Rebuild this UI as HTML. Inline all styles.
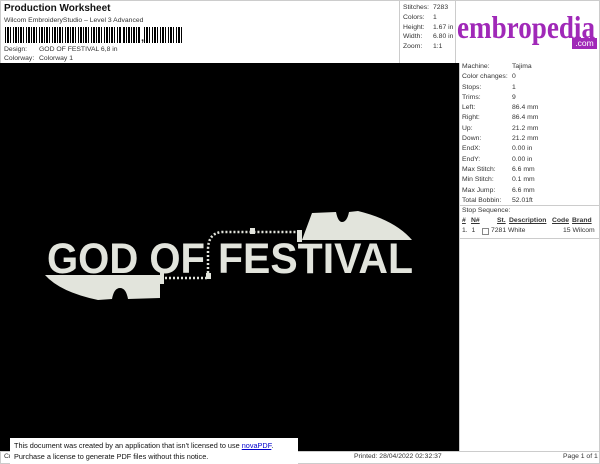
<!DOCTYPE html>
<html><head><meta charset="utf-8"><style>
*{margin:0;padding:0;box-sizing:border-box}
body{width:600px;height:464px;background:#fff;font-family:"Liberation Sans",sans-serif;color:#222;position:relative;overflow:hidden;font-size:7px}
.a{position:absolute;white-space:nowrap}
.t{font-size:6.8px;color:#333}
</style></head><body>
<div class="a" style="left:4px;top:3px;font-size:10px;font-weight:bold;color:#111">Production Worksheet</div>
<div class="a t" style="left:4px;top:17px">Wilcom EmbroideryStudio – Level 3 Advanced</div>
<div class="a" style="left:5px;top:27px;width:117px;height:16px;background:repeating-linear-gradient(90deg,#000 0 1px,#fff 1px 2px,#000 2px 4px,#fff 4px 5px,#000 5px 6px,#fff 6px 8px,#000 8px 9px,#fff 9px 10px,#000 10px 12px,#fff 12px 13px)"></div>
<div class="a" style="left:144px;top:27px;width:39px;height:16px;background:repeating-linear-gradient(90deg,#000 0 1px,#fff 1px 2px,#000 2px 4px,#fff 4px 5px,#000 5px 6px,#fff 6px 8px)"></div>
<div class="a" style="left:122px;top:27px;width:18px;height:16px;background:repeating-linear-gradient(90deg,#fff 0 1px,#000 1px 3px,#fff 3px 4px,#000 4px 5px)"></div>
<div class="a" style="left:141px;top:32px;font-size:11px;font-weight:bold">,</div>
<div class="a t" style="left:4px;top:46px">Design:</div><div class="a t" style="left:39px;top:46px">GOD OF FESTIVAL 6,8 in</div>
<div class="a t" style="left:4px;top:55px">Colorway:</div><div class="a t" style="left:39px;top:55px">Colorway 1</div>
<div class="a" style="left:0;top:0;width:600px;height:63px;border:1px solid #ccc;border-bottom:none"></div>
<div class="a" style="left:399px;top:0;width:1px;height:63px;background:#ccc"></div>
<div class="a" style="left:455px;top:0;width:1px;height:63px;background:#ccc"></div>
<div class="a t" style="left:403px;top:3px;line-height:9.8px">Stitches:<br>Colors:<br>Height:<br>Width:<br>Zoom:</div>
<div class="a t" style="left:433px;top:3px;line-height:9.8px">7283<br>1<br>1.67 in<br>6.80 in<br>1:1</div>
<svg class="a" style="left:455px;top:0" width="145" height="50"><text x="2" y="38" font-family="Liberation Serif, serif" font-weight="bold" font-size="32" fill="#a028b8" textLength="138" lengthAdjust="spacingAndGlyphs">embropedia</text></svg>
<div class="a" style="left:572px;top:38px;width:25px;height:11px;background:#a028b8;color:#fff;font-size:8.5px;line-height:11px;text-align:center">.com</div>
<div class="a" style="left:0;top:63px;width:459px;height:388px;background:#000"></div>
<svg class="a" style="left:0;top:0" width="460" height="450">
<g fill="#e2e4dc">
<path d="M312 213 L336 212 Q338 222 342 222 Q347 222 349 212 L358 211 Q395 220 412 240 L302 240 Z"/>
<rect x="297" y="230" width="5" height="12"/>
<path d="M45 275 L160 275 L160 298 L128 299 Q126 288 120 288 Q114 288 112 299 L98 300 Q60 292 45 275 Z"/>
<rect x="160" y="270" width="4" height="14"/>
<text x="47" y="273" font-family="Liberation Sans" font-weight="bold" font-size="43" textLength="158" lengthAdjust="spacingAndGlyphs">GOD OF</text>
<text x="218" y="273" font-family="Liberation Sans" font-weight="bold" font-size="43" textLength="195" lengthAdjust="spacingAndGlyphs">FESTIVAL</text>
</g>
<path d="M165 278 H208 V250 Q208 233 222 232 H296" fill="none" stroke="#e2e4dc" stroke-width="2.5" stroke-dasharray="2 2"/>
<rect x="206" y="273" width="5" height="6" fill="#e2e4dc"/><rect x="250" y="228" width="5" height="6" fill="#e2e4dc"/>
</svg>
<div class="a" style="left:459px;top:63px;width:141px;height:388px;border-left:1px solid #ccc;border-right:1px solid #ccc"></div>
<div class="a t" style="left:462px;top:62px;line-height:10.3px">Machine:<br>Color changes:<br>Stops:<br>Trims:<br>Left:<br>Right:<br>Up:<br>Down:<br>EndX:<br>EndY:<br>Max Stitch:<br>Min Stitch:<br>Max Jump:<br>Total Bobbin:</div>
<div class="a t" style="left:512px;top:62px;line-height:10.3px">Tajima<br>0<br>1<br>9<br>86.4 mm<br>86.4 mm<br>21.2 mm<br>21.2 mm<br>0.00 in<br>0.00 in<br>6.6 mm<br>0.1 mm<br>6.6 mm<br>52.01ft</div>
<div class="a" style="left:459px;top:205px;width:141px;height:1px;background:#ccc"></div>
<div class="a t" style="left:462px;top:207px">Stop Sequence:</div>
<div class="a t" style="left:462px;top:217px;font-weight:bold;text-decoration:underline">#</div>
<div class="a t" style="left:471px;top:217px;font-weight:bold;text-decoration:underline">N#</div>
<div class="a t" style="left:497px;top:217px;font-weight:bold;text-decoration:underline">St.</div>
<div class="a t" style="left:509px;top:217px;font-weight:bold;text-decoration:underline">Description</div>
<div class="a t" style="left:552px;top:217px;font-weight:bold;text-decoration:underline">Code</div>
<div class="a t" style="left:572px;top:217px;font-weight:bold;text-decoration:underline">Brand</div>
<div class="a t" style="left:462px;top:227px">1.&nbsp; 1</div>
<div class="a" style="left:482px;top:228px;width:7px;height:7px;border:1px solid #888"></div>
<div class="a t" style="left:491px;top:227px">7281 White</div>
<div class="a t" style="left:563px;top:227px">15 Wilcom</div>
<div class="a" style="left:459px;top:238px;width:141px;height:1px;background:#ccc"></div>
<div class="a" style="left:0;top:451px;width:600px;height:13px;border:1px solid #ccc"></div>
<div class="a t" style="left:4px;top:453px">Cr</div>
<div class="a t" style="left:354px;top:453px">Printed: 28/04/2022 02:32:37</div>
<div class="a t" style="left:563px;top:453px">Page 1 of 1</div>
<div class="a" style="left:10px;top:438px;width:288px;height:26px;background:#fff;font-size:7.3px;color:#111;padding:2px 0 0 4px;line-height:11px">This document was created by an application that isn't licensed to use <span style="color:#00c;text-decoration:underline">novaPDF</span>.<br>Purchase a license to generate PDF files without this notice.</div>
</body></html>
